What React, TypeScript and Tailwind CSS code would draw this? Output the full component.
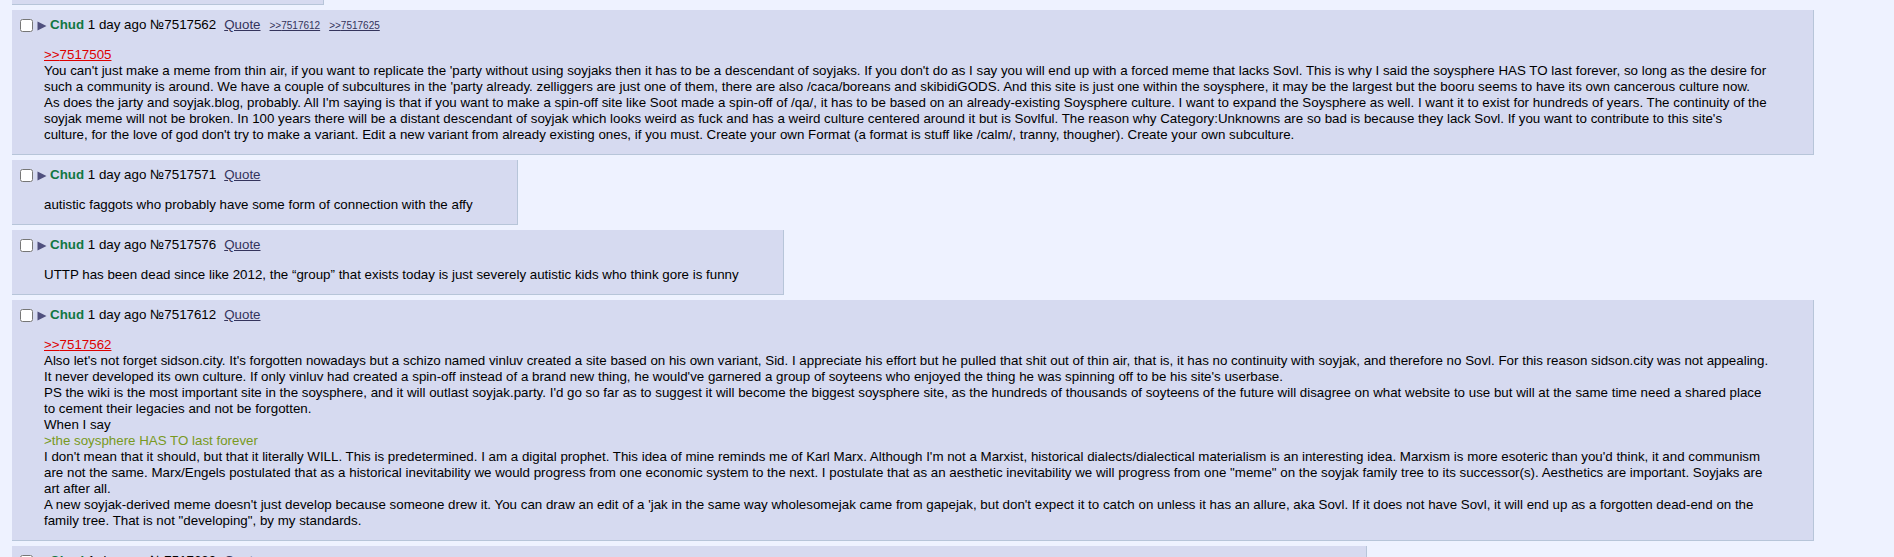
import type { ReactNode } from "react";

type PostProps = {
  no: string;
  replies?: string[];
  className?: string;
  children: ReactNode;
};

function Triangle() {
  return (
    <svg
      width="10"
      height="10"
      viewBox="0 0 10 10"
      className="ml-[4px] mt-[4px] shrink-0"
    >
      <path d="M0.5 0.5 L9.5 5 L0.5 9.5 Z" fill="#50507e" />
    </svg>
  );
}

function Post({ no, replies = [], className = "", children }: PostProps) {
  return (
    <div
      className={
        "max-w-[1802px] bg-[#d6daf0] border-r border-b border-[#b7c5d9] pl-[8px] pr-[4px] pt-[7px] pb-[11px] " +
        className
      }
    >
      <div className="flex items-start h-[16px] whitespace-nowrap">
        <input
          type="checkbox"
          className="m-0 mt-[2px] w-[13px] h-[13px] shrink-0"
        />
        <Triangle />
        <span className="ml-[3px]">
          <span className="font-bold text-[#117743]">Chud</span> 1 day ago №
          {no}
          <a href="#" className="ml-[8px] text-[#34345c] underline">
            Quote
          </a>
          {replies.map((r) => (
            <a
              key={r}
              href="#"
              className="ml-[9px] text-[10px] text-[#34345c] underline"
            >
              &gt;&gt;{r}
            </a>
          ))}
        </span>
      </div>
      <div className="mt-[14px] ml-[24px] pr-[40px]">{children}</div>
    </div>
  );
}

function QuoteLink({ to }: { to: string }) {
  return (
    <>
      <a href="#" className="text-[#dd0000] underline">
        &gt;&gt;{to}
      </a>
      <br />
    </>
  );
}

export default function App() {
  return (
    <div className="min-h-screen bg-[#eef2ff] text-black font-['Liberation_Sans',Arial,sans-serif] text-[10pt] leading-[16px]">
      <div className="flex flex-col items-start gap-[5px] pl-[12px]">
        <div className="w-[312px] h-[5px] bg-[#d6daf0] border-r border-b border-[#b7c5d9]" />

        <Post no="7517562" replies={["7517612", "7517625"]}>
          <QuoteLink to="7517505" />
          You can't just make a meme from thin air, if you want to replicate the
          'party without using soyjaks then it has to be a descendant of
          soyjaks. If you don't do as I say you will end up with a forced meme
          that lacks Sovl. This is why I said the soysphere HAS TO last
          forever, so long as the desire for such a community is around. We
          have a couple of subcultures in the 'party already. zelliggers are
          just one of them, there are also /caca/boreans and skibidiGODS. And
          this site is just one within the soysphere, it may be the largest but
          the booru seems to have its own cancerous culture now.
          <br />
          As does the jarty and soyjak.blog, probably. All I'm saying is that
          if you want to make a spin-off site like Soot made a spin-off of
          /qa/, it has to be based on an already-existing Soysphere culture. I
          want to expand the Soysphere as well. I want it to exist for hundreds
          of years. The continuity of the soyjak meme will not be broken. In
          100 years there will be a distant descendant of soyjak which looks
          weird as fuck and has a weird culture centered around it but is
          Sovlful. The reason why Category:Unknowns are so bad is because they
          lack Sovl. If you want to contribute to this site's culture, for the
          love of god don't try to make a variant. Edit a new variant from
          already existing ones, if you must. Create your own Format (a format
          is stuff like /calm/, tranny, thougher). Create your own subculture.
        </Post>

        <Post no="7517571">
          autistic faggots who probably have some form of connection with the
          affy
        </Post>

        <Post no="7517576">
          UTTP has been dead since like 2012, the “group” that exists today is
          just severely autistic kids who think gore is funny
        </Post>

        <Post no="7517612">
          <QuoteLink to="7517562" />
          Also let's not forget sidson.city. It's forgotten nowadays but a
          schizo named vinluv created a site based on his own variant, Sid. I
          appreciate his effort but he pulled that shit out of thin air, that
          is, it has no continuity with soyjak, and therefore no Sovl. For this
          reason sidson.city was not appealing.
          <br />
          It never developed its own culture. If only vinluv had created a
          spin-off instead of a brand new thing, he would've garnered a group
          of soyteens who enjoyed the thing he was spinning off to be his
          site's userbase.
          <br />
          PS the wiki is the most important site in the soysphere, and it will
          outlast soyjak.party. I'd go so far as to suggest it will become the
          biggest soysphere site, as the hundreds of thousands of soyteens of
          the future will disagree on what website to use but will at the same
          time need a shared place to cement their legacies and not be
          forgotten.
          <br />
          When I say
          <br />
          <span className="text-[#789922]">
            &gt;the soysphere HAS TO last forever
          </span>
          <br />
          I don't mean that it should, but that it literally WILL. This is
          predetermined. I am a digital prophet. This idea of mine reminds me
          of Karl Marx. Although I'm not a Marxist, historical
          dialects/dialectical materialism is an interesting idea. Marxism is
          more esoteric than you'd think, it and communism are not the same.
          Marx/Engels postulated that as a historical inevitability we would
          progress from one economic system to the next. I postulate that as an
          aesthetic inevitability we will progress from one "meme" on the
          soyjak family tree to its successor(s). Aesthetics are important.
          Soyjaks are art after all.
          <br />
          A new soyjak-derived meme doesn't just develop because someone drew
          it. You can draw an edit of a 'jak in the same way wholesomejak came
          from gapejak, but don't expect it to catch on unless it has an
          allure, aka Sovl. If it does not have Sovl, it will end up as a
          forgotten dead-end on the family tree. That is not "developing", by my
          standards.
        </Post>

        <Post no="7517630" className="w-[1355px]">
          the soysphere will outlive us all
        </Post>
      </div>
    </div>
  );
}
